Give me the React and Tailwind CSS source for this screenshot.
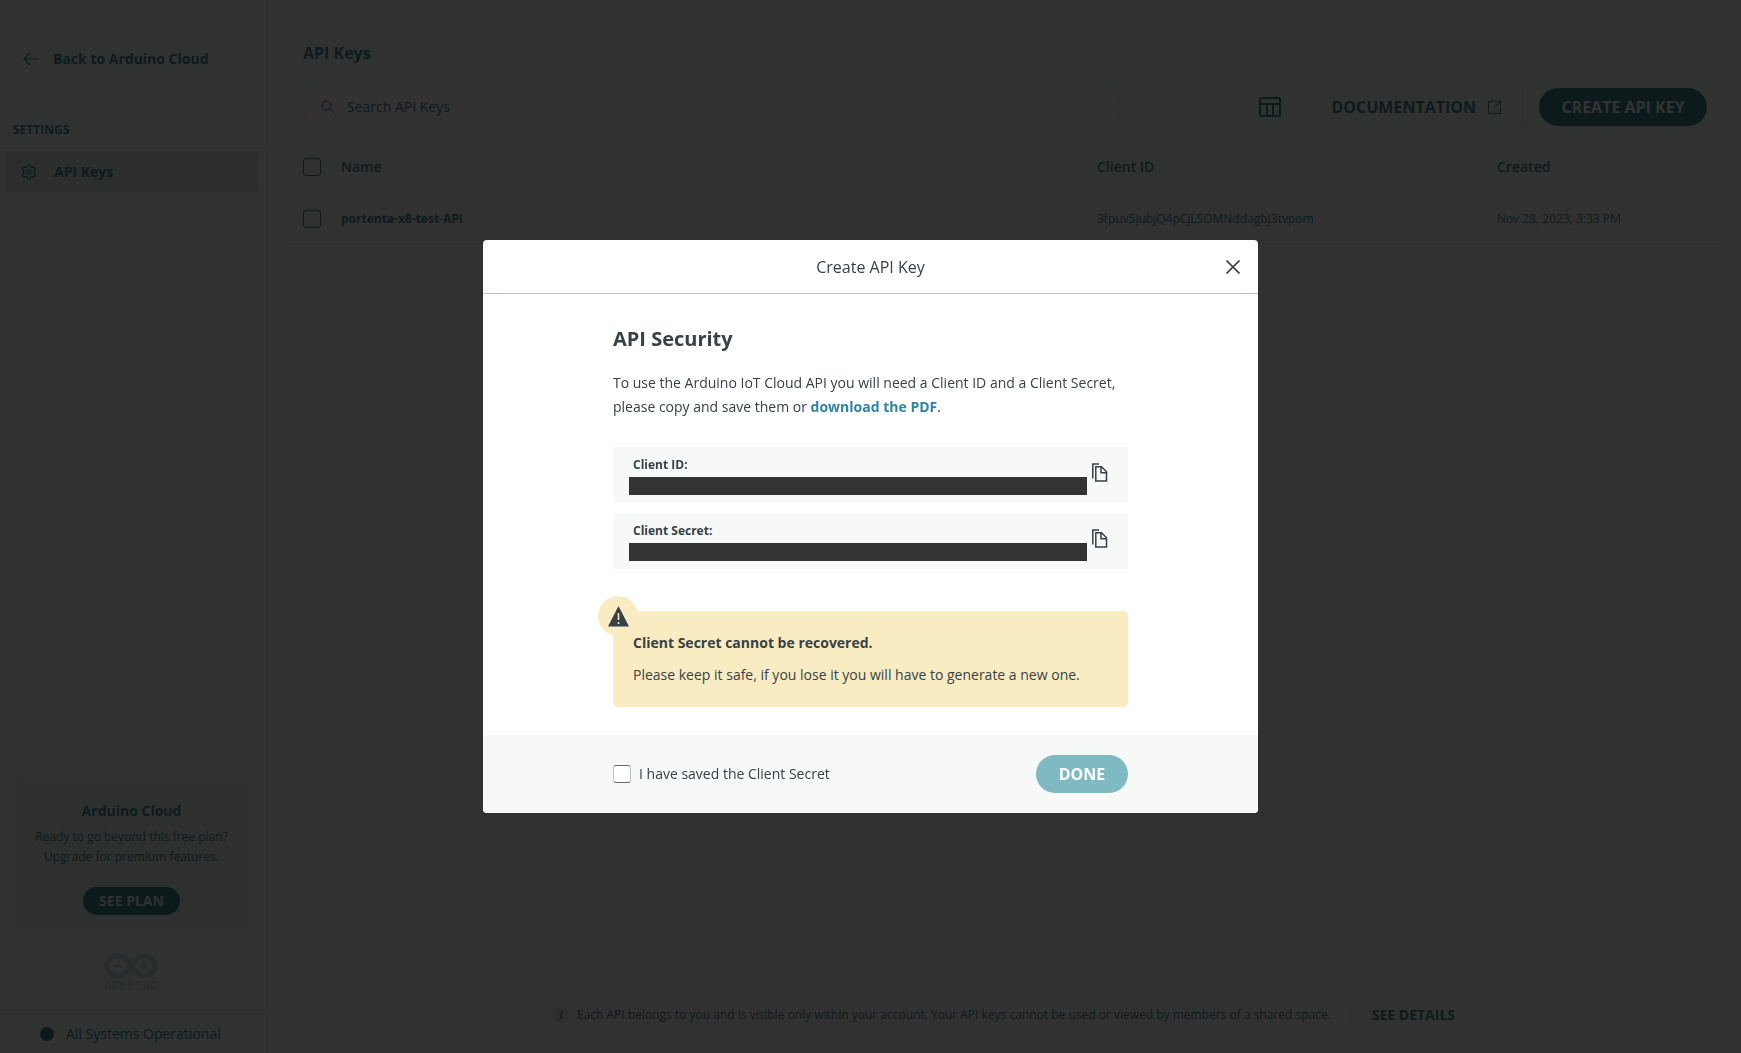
import { useState } from 'react';

const apiKeys = [
    { name: 'portenta-x8-test-API', clientId: '3fpuv5jubjQ4pCjLSOMNddagbJ3tvpom', created: 'Nov 28, 2023, 3:33 PM' },
];

function ArrowLeftIcon() {
    return (
        <svg className="h-4 w-4" viewBox="0 0 16 16" fill="none" stroke="currentColor" strokeWidth="1.2" aria-hidden="true">
            <path d="M7 2 1 8l6 6M1 8h14" />
        </svg>
    );
}

function GearIcon() {
    return (
        <svg className="h-4 w-4" viewBox="0 0 16 16" fill="none" stroke="currentColor" strokeWidth="1.2" strokeLinejoin="round" aria-hidden="true">
            <path d="M6.5 1h3l.4 2 1.2.6 2-.7 1.5 2.5-1.5 1.4v2.4l1.5 1.4-1.5 2.5-2-.7-1.2.6-.4 2h-3l-.4-2-1.2-.6-2 .7-1.5-2.5 1.5-1.4V6.8L1.4 5.4l1.5-2.5 2 .7L6.1 3z" />
            <circle cx="8" cy="8" r="2" />
        </svg>
    );
}

function SearchIcon() {
    return (
        <svg className="h-[14px] w-[14px] shrink-0" viewBox="0 0 14 14" fill="none" stroke="currentColor" aria-hidden="true">
            <circle cx="5.5" cy="5.5" r="4.5" />
            <path d="m9 9 4.3 4.3" />
        </svg>
    );
}

function TableIcon() {
    return (
        <svg className="h-5 w-[22px]" viewBox="0 0 22 20" fill="none" stroke="currentColor" strokeWidth="2" aria-hidden="true">
            <rect x="1" y="1" width="20" height="18" rx="1.5" />
            <path d="M1 7h20M8 7v12M14 7v12" />
        </svg>
    );
}

function ExternalIcon() {
    return (
        <svg className="h-[13px] w-[13px]" viewBox="0 0 13 13" fill="none" stroke="currentColor" aria-hidden="true">
            <path d="M6 .5H.5v12h12V7M8.500 .5h4v4M12.500 .5 6 7" />
        </svg>
    );
}

function CloseIcon() {
    return (
        <svg className="h-[14px] w-[14px]" viewBox="0 0 14 14" fill="none" stroke="currentColor" strokeWidth="1.6" aria-hidden="true">
            <path d="m.5.5 13 13M13.500.5l-13 13" />
        </svg>
    );
}

function CopyIcon() {
    return (
        <svg className="h-[19px] w-4" viewBox="0 0 16 19" fill="none" stroke="currentColor" strokeWidth="1.5" aria-hidden="true">
            <path d="M.8 15.500V1H7" />
            <path d="M3.800 3.800h5.700l5 5v9.200H3.800z" />
            <path d="M9 3.800v6h5.500" />
        </svg>
    );
}

function WarningIcon() {
    return (
        <svg className="h-[21px] w-[21px]" viewBox="0 0 21 21" aria-hidden="true">
            <path d="M10.500 0 21 20.500H0z" fill="#374146" />
            <path d="M10.500 7v7M10.500 16v2" stroke="#faecc2" strokeWidth="1.6" />
        </svg>
    );
}

function ArduinoLogo() {
    return (
        <div className="flex flex-col items-center text-[#292c2c]">
            <svg className="h-[26px] w-[54px]" viewBox="0 0 54 26" fill="none" stroke="currentColor" aria-hidden="true">
                <path
                    strokeWidth="5"
                    d="M27 13C23 6 19 3 14 3 8 3 3 7.500 3 13s5 10 11 10c5 0 9-3 13-10s8-10 13-10c6 0 11 4.500 11 10s-5 10-11 10c-5 0-9-3-13-10z"
                />
                <path strokeWidth="3" d="M10 13h8M36 13h8M40 9v8" />
            </svg>
            <span className="font-['Liberation_Mono',monospace] text-[13px] leading-4 font-bold">ARDUINO</span>
        </div>
    );
}

function DimCheckbox({ label }) {
    return (
        <input
            type="checkbox"
            aria-label={label}
            className="block h-[18px] w-[18px] appearance-none rounded-[3px] border border-[#0d1a1c]"
        />
    );
}

function Sidebar() {
    return (
        <aside className="flex w-[267px] shrink-0 flex-col border-r border-[#2b2e2e] bg-[#303231]">
            <a href="#" className="mt-[47px] flex items-center gap-[14px] pl-[23px] text-sm leading-6 font-bold">
                <ArrowLeftIcon />
                Back to Arduino Cloud
            </a>
            <h2 className="mt-[49px] border-b border-[#2b2e2e] pb-[7px] pl-[13px] text-xs leading-5 font-bold">SETTINGS</h2>
            <nav className="pt-1 pr-2 pl-[5px]">
                <a href="#" className="flex h-10 items-center gap-[17px] rounded-[4px] bg-[#2c2e2d] pl-4 text-sm font-bold">
                    <GearIcon />
                    API Keys
                </a>
            </nav>

            <div className="mt-auto mr-4 ml-[13px] flex flex-col items-center rounded-lg bg-[#2e302f] pt-4 pb-4 text-center">
                <h3 className="text-sm leading-6 font-bold">Arduino Cloud</h3>
                <p className="mt-1 text-xs leading-5">
                    Ready to go beyond this free plan?
                    <br />
                    Upgrade for premium features.
                </p>
                <button type="button" className="mt-5 h-7 rounded-full bg-[#0d1a1c] px-4 text-sm font-bold text-[#303231]">
                    SEE PLAN
                </button>
            </div>
            <div className="mr-1 flex justify-center pt-[22px] pb-[18px]">
                <ArduinoLogo />
            </div>
            <a href="#" className="flex h-10 items-center gap-3 border-t border-[#2b2e2e] pl-10 text-sm">
                <span className="h-[14px] w-[14px] rounded-full bg-[#0d1a1c]" />
                All Systems Operational
            </a>
        </aside>
    );
}

function KeysPage() {
    return (
        <main className="flex min-w-0 flex-1 flex-col bg-[#323131]">
            <div className="bg-[#303231] pt-[41px] pr-[34px] pb-5 pl-9">
                <h1 className="text-base leading-6 font-bold">API Keys</h1>
                <div className="mt-[23px] flex h-[38px] items-center">
                    <label className="flex h-full max-w-[816px] flex-1 items-center gap-3 rounded-full bg-[#333132] pl-[18px]">
                        <SearchIcon />
                        <input
                            type="search"
                            aria-label="Search API Keys"
                            placeholder="Search API Keys"
                            className="w-full bg-transparent text-sm outline-none placeholder:text-[#0d1a1c]"
                        />
                    </label>
                    <div className="ml-auto flex h-full items-center">
                        <button type="button" aria-label="Columns">
                            <TableIcon />
                        </button>
                        <a href="#" className="ml-[50px] flex items-center gap-3 text-base font-bold">
                            DOCUMENTATION
                            <ExternalIcon />
                        </a>
                        <div className="ml-[21px] h-full border-l border-[#2c2f2f]" />
                        <button type="button" className="ml-4 h-full w-[168px] rounded-full bg-[#0d1a1c] text-base font-bold text-[#323333]">
                            CREATE API KEY
                        </button>
                    </div>
                </div>
            </div>

            <table className="w-full table-fixed text-left">
                <thead className="bg-[#303231]">
                    <tr className="h-[41px] text-sm">
                        <th className="w-[74px] pl-9"><DimCheckbox label="Select all" /></th>
                        <th className="font-semibold">Name</th>
                        <th className="w-[400px] font-semibold">Client ID</th>
                        <th className="w-[244px] font-semibold">Created</th>
                    </tr>
                </thead>
                <tbody>
                    {apiKeys.map((key) => (
                        <tr key={key.clientId} className="h-14 text-xs">
                            <td className="pt-2 pl-9"><DimCheckbox label={key.name} /></td>
                            <td className="pt-2 font-bold">{key.name}</td>
                            <td className="pt-2">{key.clientId}</td>
                            <td className="pt-2">{key.created}</td>
                        </tr>
                    ))}
                </tbody>
            </table>
            <div className="mx-5 border-t border-[#2c2e2e]" />

            <footer className="mt-auto mb-7 flex h-5 items-center justify-center text-xs">
                <span className="flex h-4 w-4 items-center justify-center rounded-full bg-[#2b2e2e] text-[11px] font-bold italic">i</span>
                <p className="ml-2">
                    Each API belongs to you and is visible only within your account. Your API keys cannot be used or viewed by members of a shared space.
                </p>
                <div className="ml-5 h-full border-l border-[#2c2e2e]" />
                <a href="#" className="ml-5 text-sm font-bold">SEE DETAILS</a>
            </footer>
        </main>
    );
}

function SecretField({ label }) {
    return (
        <div className="flex h-14 items-start bg-[#f7f9f9] pl-4">
            <div className="w-[458px]">
                <div className="mt-2 pl-1 text-xs leading-5 font-bold">{label}</div>
                <div className="mt-[2px] h-[18px] bg-[#333333]" />
            </div>
            <button type="button" aria-label="Copy" className="mt-4 ml-[5px]">
                <CopyIcon />
            </button>
        </div>
    );
}

function CreateKeyDialog() {
    const [saved, setSaved] = useState(false);

    return (
        <div className="fixed inset-0 z-10 flex items-center justify-center">
            <div role="dialog" aria-label="Create API Key" className="w-[775px] overflow-hidden rounded-[4px] bg-white text-[#374146]">
                <header className="relative flex h-[54px] items-center justify-center border-b border-[#b6c5c5]">
                    <h2 className="text-base">Create API Key</h2>
                    <button type="button" aria-label="Close" className="absolute right-[18px]">
                        <CloseIcon />
                    </button>
                </header>

                <div className="mx-auto w-[515px] pt-[29px] pb-7">
                    <h3 className="text-xl leading-8 font-bold">API Security</h3>
                    <p className="mt-4 text-sm leading-6">
                        To use the Arduino IoT Cloud API you will need a Client ID and a Client Secret, please copy and save them or{' '}
                        <a href="#" className="font-bold text-[#2f84a6]">download the PDF</a>.
                    </p>
                    <div className="mt-7 flex flex-col gap-[10px]">
                        <SecretField label="Client ID:" />
                        <SecretField label="Client Secret:" />
                    </div>
                    <div className="relative mt-[42px] rounded-[5px] bg-[#faecc2] px-5 pt-5 pb-5 text-sm leading-6">
                        <span className="absolute -top-[15px] -left-[15px] flex h-10 w-10 items-center justify-center rounded-full bg-[#faecc2]">
                            <WarningIcon />
                        </span>
                        <h4 className="font-bold">Client Secret cannot be recovered.</h4>
                        <p className="mt-2">Please keep it safe, if you lose it you will have to generate a new one.</p>
                    </div>
                </div>

                <footer className="bg-[#f7f9f9]">
                    <div className="mx-auto flex h-[78px] w-[515px] items-center justify-between">
                        <label className="flex items-center gap-2 text-sm">
                            <input
                                type="checkbox"
                                checked={saved}
                                onChange={(e) => setSaved(e.target.checked)}
                                className="h-[18px] w-[18px] appearance-none rounded-[3px] border border-x-[#b6c5c5] border-y-[#7f5f70] bg-white checked:bg-[#7fb9c1]"
                            />
                            I have saved the Client Secret
                        </label>
                        <button type="button" className="h-[38px] w-[92px] rounded-full bg-[#7fb9c1] text-base font-bold text-white">
                            DONE
                        </button>
                    </div>
                </footer>
            </div>
        </div>
    );
}

export default function App() {
    return (
        <div className="flex min-h-screen bg-[#303231] font-['Open_Sans',sans-serif] text-[#0d1a1c]">
            <Sidebar />
            <KeysPage />
            <CreateKeyDialog />
        </div>
    );
}
